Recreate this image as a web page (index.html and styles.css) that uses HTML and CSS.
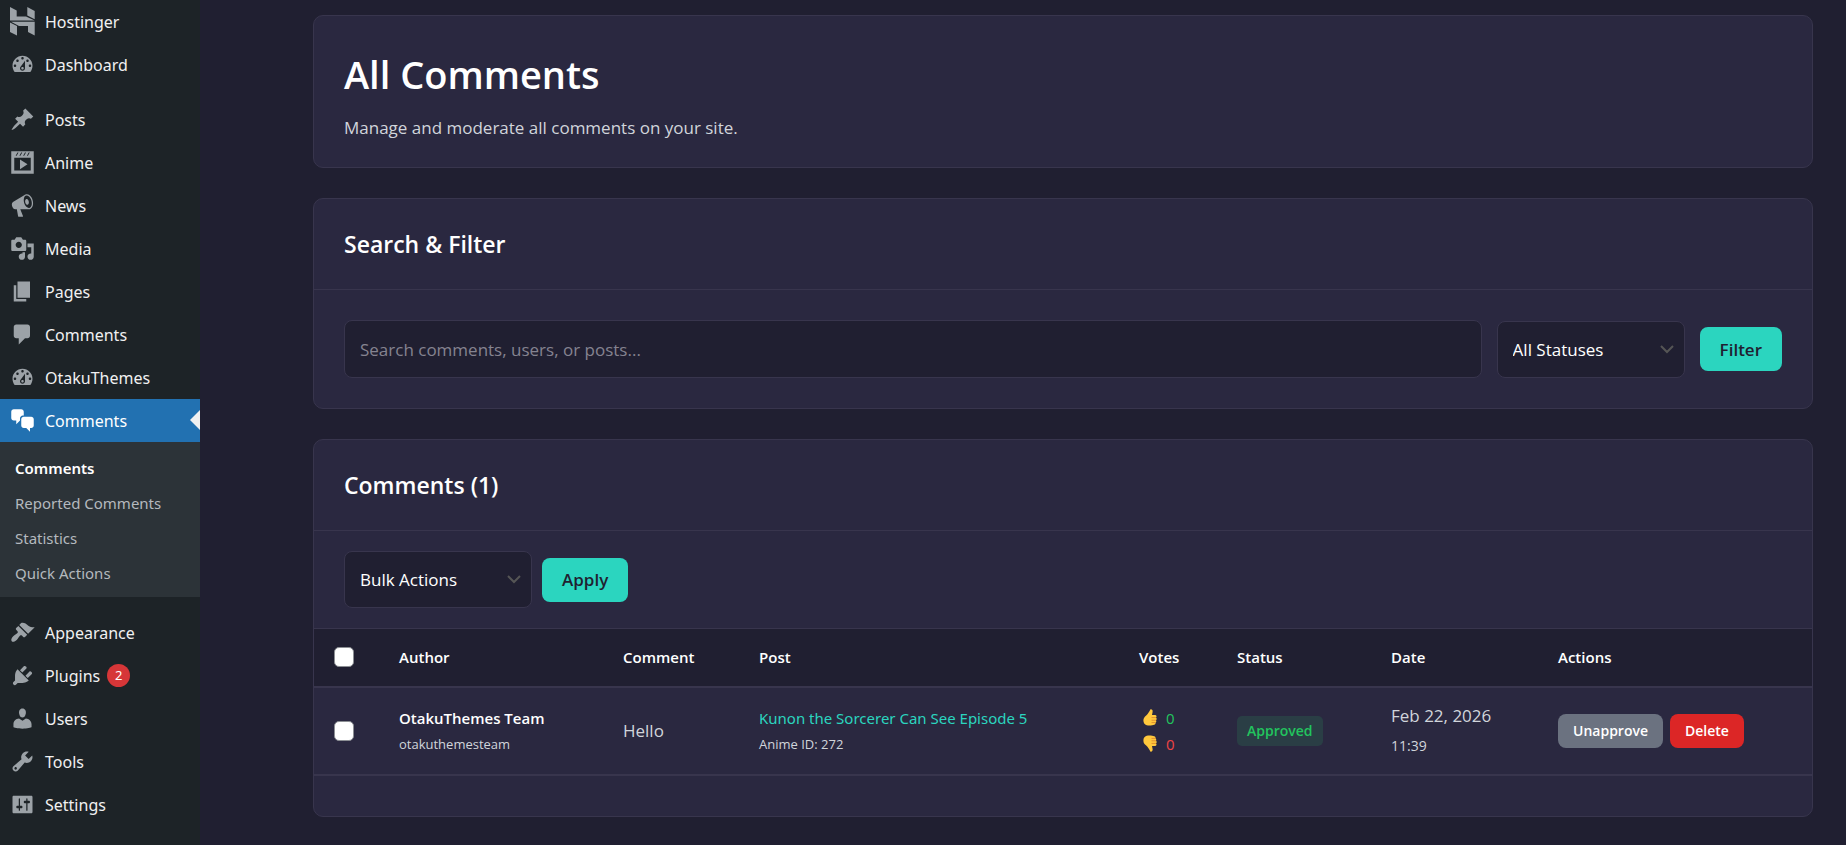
FILE: index.html
```
<!DOCTYPE html>
<html lang="en">
<head>
<meta charset="utf-8">
<title>All Comments</title>
<link rel="stylesheet" href="styles.css">
</head>
<body>

<!-- admin menu -->
<nav class="menu">
    <ul>
        <li><a href="#">
            <svg viewBox="0 0 25 29" class="tall"><path d="M0 0l6.700 3.500v6H16l8.700 4H0zM17.300 0l7.400 4v8.200l-7.400-3.700zM0 15.500L7 19v9.500L0 25zM1 14.800h23.700v13.700L18 25v-6H9z"/></svg>
            Hostinger</a></li>
        <li><a href="#">
            <svg viewBox="0 0 20 20"><path d="M3.76 16h12.48c1.1-1.37 1.76-3.11 1.76-5 0-4.42-3.58-8-8-8s-8 3.58-8 8c0 1.89.66 3.63 1.76 5zM10 4c.55 0 1 .45 1 1s-.45 1-1 1-1-.45-1-1 .45-1 1-1zM6 6c.55 0 1 .45 1 1s-.45 1-1 1-1-.45-1-1 .45-1 1-1zm8 0c.55 0 1 .45 1 1s-.45 1-1 1-1-.45-1-1 .45-1 1-1zm-5.37 5.55L12 7v6c0 1.1-.9 2-2 2s-2-.9-2-2c0-.57.24-1.08.63-1.45zM4 10c.55 0 1 .45 1 1s-.45 1-1 1-1-.45-1-1 .45-1 1-1zm12 0c.55 0 1 .45 1 1s-.45 1-1 1-1-.45-1-1 .45-1 1-1zm-5 3c0-.55-.45-1-1-1s-1 .45-1 1 .45 1 1 1 1-.45 1-1z"/></svg>
            Dashboard</a></li>
        <li class="sep"></li>
        <li><a href="#">
            <svg viewBox="0 0 20 20"><path d="M10.44 3.02l1.82-1.82 6.36 6.35-1.83 1.82c-1.05-.68-2.48-.57-3.41.36l-.75.75c-.92.93-1.04 2.35-.35 3.41l-1.83 1.82-2.41-2.41-2.8 2.79c-.42.42-3.38 2.71-3.8 2.29s1.86-3.39 2.28-3.81l2.79-2.79L4.1 9.36l1.83-1.82c1.05.69 2.48.57 3.4-.36l.75-.75c.93-.92 1.05-2.35.36-3.41z"/></svg>
            Posts</a></li>
        <li><a href="#">
            <svg viewBox="0 0 20 20"><path d="M1 1h18v18H1zM3.400 6.100h13.200v10.300H3.400zM8 7.500l6 3.900-6 3.900zM4.500 4.500L6 2h.8L5.300 4.500zM7.500 4.500L9 2h.8L8.300 4.500zM10.500 4.500L12 2h.8l-1.500 2.500zM13.500 4.500L15 2h.8l-1.500 2.500z"/></svg>
            Anime</a></li>
        <li><a href="#">
            <svg viewBox="0 0 20 20"><path d="M18.150 5.940c.46 1.620.38 3.220-.02 4.480-.42 1.280-1.260 2.180-2.300 2.480-.16.060-.26.060-.4.060-.06.020-.12.020-.18.020-.06.020-.14.020-.22.020h-6.800l2.220 5.500c.02.140-.06.260-.14.340-.08.100-.24.160-.34.160H6.950c-.1 0-.26-.06-.34-.16-.08-.08-.16-.2-.14-.34l-1-5.500H4.250l-.02-.02c-.5.060-1.080-.18-1.540-.62s-.88-1.080-1.060-1.880c-.24-.8-.2-1.560-.02-2.200.18-.62.580-1.080 1.060-1.300l.02-.02 9-5.400c.1-.06.180-.1.240-.16.060-.04.140-.08.240-.12.160-.08.280-.12.5-.18 1.040-.3 2.240.1 3.220.98s1.840 2.240 2.260 3.860zm-2.580 5.980h-.02c.4-.1.740-.34 1.040-.7.580-.7.860-1.760.86-3.040 0-.64-.1-1.300-.28-1.980-.34-1.360-1.020-2.500-1.780-3.240s-1.680-1.100-2.460-.88c-.82.220-1.400.960-1.700 2-.32 1.040-.28 2.360.06 3.720.38 1.360 1 2.500 1.800 3.240.78.740 1.620 1.100 2.480.88zm-2.540-7.080c.22-.04.420-.02.620.04.380.160.760.480 1.020 1s.42 1.200.42 1.780c0 .3-.04.560-.12.8-.18.480-.44.840-.86.940-.34.100-.8-.06-1.140-.4s-.64-.86-.78-1.500c-.18-.62-.12-1.240.02-1.720s.48-.84.820-.94z"/></svg>
            News</a></li>
        <li><a href="#">
            <svg viewBox="0 0 20 20"><path d="M13 11V4c0-.55-.45-1-1-1h-1.670L9 1H5L3.670 3H2c-.55 0-1 .45-1 1v7c0 .55.45 1 1 1h10c.55 0 1-.45 1-1zM7 4.500c1.380 0 2.500 1.120 2.500 2.500S8.380 9.500 7 9.500 4.500 8.380 4.500 7 5.620 4.500 7 4.500zM14 6h5v10.500c0 1.380-1.120 2.500-2.500 2.500S14 17.880 14 16.500s1.120-2.500 2.500-2.500c.17 0 .34.02.5.05V9h-3V6zm-4 8.050V13h2v3.500c0 1.380-1.120 2.500-2.500 2.500S7 17.880 7 16.500 8.120 14 9.500 14c.17 0 .34.02.5.05z"/></svg>
            Media</a></li>
        <li><a href="#">
            <svg viewBox="0 0 20 20"><path d="M6 15V2h10v13H6zm-1 1h8v2H3V5h2v11z"/></svg>
            Pages</a></li>
        <li><a href="#">
            <svg viewBox="0 0 20 20"><path d="M5 2h9c1.1 0 2 .9 2 2v7c0 1.1-.9 2-2 2h-2l-5 5v-5H5c-1.1 0-2-.9-2-2V4c0-1.1.9-2 2-2z"/></svg>
            Comments</a></li>
        <li><a href="#">
            <svg viewBox="0 0 20 20"><path d="M3.76 16h12.48c1.1-1.37 1.76-3.11 1.76-5 0-4.42-3.58-8-8-8s-8 3.58-8 8c0 1.89.66 3.63 1.76 5zM10 4c.55 0 1 .45 1 1s-.45 1-1 1-1-.45-1-1 .45-1 1-1zM6 6c.55 0 1 .45 1 1s-.45 1-1 1-1-.45-1-1 .45-1 1-1zm8 0c.55 0 1 .45 1 1s-.45 1-1 1-1-.45-1-1 .45-1 1-1zm-5.37 5.55L12 7v6c0 1.1-.9 2-2 2s-2-.9-2-2c0-.57.24-1.08.63-1.45zM4 10c.55 0 1 .45 1 1s-.45 1-1 1-1-.45-1-1 .45-1 1-1zm12 0c.55 0 1 .45 1 1s-.45 1-1 1-1-.45-1-1 .45-1 1-1zm-5 3c0-.55-.45-1-1-1s-1 .45-1 1 .45 1 1 1 1-.45 1-1z"/></svg>
            OtakuThemes</a></li>
        <li class="current"><a href="#">
            <svg viewBox="0 0 20 20"><path d="M11 6h-.82C9.07 6 8 7.200 8 8.160V10l-3 3v-3H3c-1.1 0-2-.9-2-2V3c0-1.1.9-2 2-2h6c1.1 0 2 .9 2 2v3zm0 1h6c1.1 0 2 .9 2 2v5c0 1.1-.9 2-2 2h-1v3l-3-3h-2c-1.1 0-2-.9-2-2V9c0-1.1.9-2 2-2z"/></svg>
            Comments</a></li>
    </ul>
    <ul class="submenu">
        <li><a href="#" class="on">Comments</a></li>
        <li><a href="#">Reported Comments</a></li>
        <li><a href="#">Statistics</a></li>
        <li><a href="#">Quick Actions</a></li>
    </ul>
    <ul>
        <li><a href="#">
            <svg viewBox="0 0 20 20"><path d="M14.480 11.060L7.410 3.990l1.500-1.500c.5-.56 2.300-.47 3.510.32 1.210.8 1.430 1.280 2.910 2.100 1.180.64 2.450 1.260 4.450.85zm-.71.71L6.700 4.700 4.930 6.470c-.39.39-.39 1.020 0 1.410l1.060 1.060c.39.39.39 1.030 0 1.420-.6.6-1.430 1.110-2.210 1.690-.35.26-.7.53-1.010.84C1.430 14.230.4 16.080 1.400 17.070c.99 1 2.840-.03 4.180-1.360.31-.31.58-.66.85-1.020.57-.78 1.080-1.610 1.690-2.210.39-.39 1.020-.39 1.410 0l1.060 1.060c.39.39 1.020.39 1.410 0z"/></svg>
            Appearance</a></li>
        <li><a href="#">
            <svg viewBox="0 0 20 20"><path d="M13.110 4.360L9.870 7.600 8 5.730l3.240-3.240c.35-.34 1.050-.2 1.560.32.52.51.66 1.210.31 1.550zm-8 1.770l.91-1.120 9.010 9.010-1.190.84c-.71.71-2.630 1.160-3.820 1.160H6.140L4.900 17.260c-.59.59-1.540.59-2.120 0-.59-.58-.59-1.530 0-2.120l1.240-1.240v-3.880c0-1.130.4-3.190 1.090-3.890zm7.260 3.970l3.240-3.240c.34-.35 1.040-.21 1.550.31.52.51.66 1.210.31 1.550l-3.240 3.250z"/></svg>
            Plugins <span class="count">2</span></a></li>
        <li><a href="#">
            <svg viewBox="0 0 20 20"><path d="M10 9.250c-2.270 0-2.730-3.440-2.730-3.440C7 4.020 7.820 2 9.970 2c2.160 0 2.980 2.020 2.710 3.810 0 0-.41 3.440-2.680 3.440zm0 2.570L12.720 10c2.390 0 4.520 2.330 4.520 4.530v2.490s-3.650 1.130-7.240 1.130c-3.650 0-7.240-1.130-7.240-1.130v-2.490c0-2.250 1.940-4.480 4.470-4.480z"/></svg>
            Users</a></li>
        <li><a href="#">
            <svg viewBox="0 0 20 20"><path d="M16.680 9.770c-1.340 1.340-3.300 1.670-4.950.99l-5.410 6.520c-.99.99-2.590.99-3.580 0s-.99-2.590 0-3.570l6.520-5.420c-.68-1.650-.35-3.610.99-4.950 1.280-1.280 3.120-1.620 4.720-1.060l-2.890 2.890 2.820 2.820 2.860-2.870c.53 1.580.18 3.390-1.080 4.650zM3.810 16.210c.4.39 1.040.39 1.430 0 .4-.4.4-1.040 0-1.430-.39-.4-1.030-.4-1.430 0-.39.39-.39 1.030 0 1.430z"/></svg>
            Tools</a></li>
        <li><a href="#">
            <svg viewBox="0 0 20 20"><path d="M18 16V4c0-.55-.45-1-1-1H3c-.55 0-1 .45-1 1v12c0 .55.45 1 1 1h14c.55 0 1-.45 1-1zM8 11h1c.55 0 1 .45 1 1s-.45 1-1 1H8v1.500c0 .28-.22.5-.5.5s-.5-.22-.5-.5V13H6c-.55 0-1-.45-1-1s.45-1 1-1h1V5.500c0-.28.22-.5.5-.5s.5.22.5.5V11zm5-2h-1c-.55 0-1-.45-1-1s.45-1 1-1h1V5.500c0-.28.22-.5.5-.5s.5.22.5.5V7h1c.55 0 1 .45 1 1s-.45 1-1 1h-1v5.500c0 .28-.22.5-.5.5s-.5-.22-.5-.5V9z"/></svg>
            Settings</a></li>
    </ul>
</nav>

<main>
    <section class="card intro">
        <h1>All Comments</h1>
        <p>Manage and moderate all comments on your site.</p>
    </section>

    <section class="card">
        <h2>Search &amp; Filter</h2>
        <form class="filters">
            <input type="text" class="field search" placeholder="Search comments, users, or posts..." aria-label="Search comments">
            <select class="field" aria-label="Status">
                <option>All Statuses</option>
                <option>Approved</option>
                <option>Pending</option>
            </select>
            <button type="button" class="btn">Filter</button>
        </form>
    </section>

    <section class="card">
        <h2>Comments (1)</h2>
        <div class="bulk">
            <select class="field" aria-label="Bulk actions">
                <option>Bulk Actions</option>
                <option>Approve</option>
                <option>Delete</option>
            </select>
            <button type="button" class="btn">Apply</button>
        </div>
        <table>
            <colgroup>
                <col class="c-check"><col class="c-author"><col class="c-comment"><col class="c-post"><col class="c-votes"><col class="c-status"><col class="c-date"><col>
            </colgroup>
            <thead>
                <tr>
                    <th><input type="checkbox" aria-label="Select all"></th>
                    <th>Author</th>
                    <th>Comment</th>
                    <th>Post</th>
                    <th>Votes</th>
                    <th>Status</th>
                    <th>Date</th>
                    <th>Actions</th>
                </tr>
            </thead>
            <tbody>
                <tr>
                    <td><input type="checkbox" aria-label="Select comment"></td>
                    <td><strong>OtakuThemes Team</strong><small>otakuthemesteam</small></td>
                    <td>Hello</td>
                    <td><a href="#" class="post">Kunon the Sorcerer Can See Episode 5</a><small>Anime ID: 272</small></td>
                    <td>
                        <div class="vote up"><svg viewBox="0 0 14 17"><path class="hand" d="M7.500.3c1.600-.2 2.400 1 2.100 2.600L9 6h3c1.600 0 2 1.800 1 2.500 1 .8.8 2.200 0 2.700.6.9.3 2-.5 2.400.3 1.200-.3 2-1.300 2.200-2 .8-5.500 1-7.500.4C1.500 15.600.4 13.800.4 11.500.4 9 1.500 8 3.200 6.500 5 5 6 3 7.500.3z"/><path class="crease" d="M8.500 8.600H13M8.500 11.200H13M8.500 13.600h4"/></svg> 0</div>
                        <div class="vote down"><svg viewBox="0 0 14 17"><g transform="matrix(1 0 0 -1 0 17)"><path class="hand" d="M7.500.3c1.600-.2 2.400 1 2.100 2.600L9 6h3c1.600 0 2 1.800 1 2.500 1 .8.8 2.200 0 2.700.6.9.3 2-.5 2.400.3 1.200-.3 2-1.300 2.200-2 .8-5.500 1-7.500.4C1.500 15.600.4 13.800.4 11.500.4 9 1.500 8 3.200 6.500 5 5 6 3 7.500.3z"/><path class="crease" d="M8.500 8.600H13M8.500 11.200H13M8.500 13.600h4"/></g></svg> 0</div>
                    </td>
                    <td><span class="status">Approved</span></td>
                    <td class="date">Feb 22, 2026<small>11:39</small></td>
                    <td><div class="actions"><button type="button" class="gray">Unapprove</button><button type="button" class="red">Delete</button></div></td>
                </tr>
            </tbody>
        </table>
    </section>
</main>

</body>
</html>
```
FILE: styles.css
```
* {
    box-sizing: border-box;
}
body {
    margin: 0;
    display: flex;
    min-height: 100vh;
    background: #201f31;
    color: #d1d5db;
    font-family: "Open Sans", "Noto Sans", sans-serif;
    font-size: 17px;
}
ul {
    list-style: none;
    margin: 0;
    padding: 0;
}
a {
    text-decoration: none;
}

/* sidebar */
.menu {
    width: 200px;
    flex: none;
    background: #1d2327;
    font-family: "Noto Sans", "Open Sans", sans-serif;
}
.menu a {
    display: flex;
    align-items: center;
    height: 43px;
    padding-left: 10px;
    gap: 10px;
    color: #f0f0f1;
    font-size: 16px;
}
.menu svg {
    width: 25px;
    height: 25px;
    fill: #9ca2a7;
    fill-rule: evenodd;
}
.menu .tall {
    height: 29px;
    fill-rule: nonzero;
}
.menu .sep {
    height: 12px;
}
.current {
    position: relative;
    background: #2271b1;
}
.current::after {
    content: "";
    position: absolute;
    right: 0;
    top: 11px;
    border: 10px solid transparent;
    border-left: 0;
    border-right-color: #f0f0f1;
}
.menu .current a,
.menu .current svg {
    color: #fff;
    fill: #fff;
}
.menu .submenu {
    margin-bottom: 14px;
    background: #2c3338;
    padding: 8px 0 7px;
}
.menu .submenu a {
    height: 35px;
    padding-left: 15px;
    color: #b4b9be;
    font-size: 15px;
}
.menu .submenu .on {
    color: #fff;
    font-weight: 600;
}
.count {
    width: 23px;
    line-height: 23px;
    margin-left: -3px;
    border-radius: 50%;
    background: #d63638;
    color: #fff;
    font-size: 13px;
    text-align: center;
}

/* content */
main {
    flex: 1;
    padding: 15px 33px 28px 113px;
}
.card {
    margin-bottom: 30px;
    background: #2a2840;
    border: 1px solid #38354d;
    border-radius: 10px;
}
.card:last-child {
    margin-bottom: 0;
    padding-bottom: 40px;
}
.intro {
    padding: 30px 30px 26px;
}
h1, h2 {
    margin: 0;
    color: #fff;
    font-weight: 600;
}
h1 {
    font-size: 38px;
    line-height: 56px;
}
h2 {
    padding: 30px;
    border-bottom: 1px solid #38354d;
    font-size: 23px;
    line-height: 30px;
}
.intro p {
    margin: 13px 0 0;
    line-height: 26px;
}
.filters {
    display: flex;
    align-items: center;
    gap: 15px;
    padding: 30px;
}
.field {
    width: 188px;
    height: 57px;
    padding: 0 15px;
    background: #201f31;
    border: 1px solid #38354d;
    border-radius: 8px;
    color: #fff;
    font: inherit;
}
select.field {
    appearance: none;
    background: #201f31 url("data:image/svg+xml,%3Csvg xmlns='http://www.w3.org/2000/svg' width='14' height='9'%3E%3Cpath d='M1 1l6 6 6-6' fill='none' stroke='%23555' stroke-width='2'/%3E%3C/svg%3E") no-repeat right 10px center;
}
.search {
    flex: 1;
    height: 58px;
}
.search::placeholder {
    color: #858390;
}
.btn {
    height: 44px;
    padding: 0 20px;
    border: 0;
    border-radius: 8px;
    background: #2bd5bf;
    color: #201f31;
    font: inherit;
    font-weight: 600;
}
.bulk {
    display: flex;
    align-items: center;
    gap: 10px;
    padding: 20px 30px;
}

/* comments table */
table {
    width: 100%;
    border-collapse: collapse;
    table-layout: fixed;
    border-top: 1px solid #38354d;
}
th, td {
    padding: 0 20px;
    text-align: left;
    border-bottom: 2px solid #38354d;
    white-space: nowrap;
}
th {
    height: 58px;
    background: #201f31;
    color: #fff;
    font-size: 15px;
    font-weight: 600;
}
td {
    height: 88px;
}
.c-check { width: 65px; }
.c-author { width: 224px; }
.c-comment { width: 136px; }
.c-post { width: 380px; }
.c-votes { width: 98px; }
.c-status { width: 154px; }
.c-date { width: 167px; }
input[type=checkbox] {
    appearance: none;
    display: block;
    width: 20px;
    height: 20px;
    margin: 0;
    background: #fff;
    border: 1px solid #8c8f94;
    border-radius: 5px;
}
strong, .post {
    display: block;
    color: #fff;
    font-size: 15px;
    font-weight: 600;
    line-height: 26px;
}
.post {
    color: #2bd5bf;
    font-family: "Noto Sans", "Open Sans", sans-serif;
    font-weight: 400;
}
small {
    display: block;
    font-size: 13px;
    line-height: 26px;
}
.date {
    line-height: 30px;
}
.date small {
    font-size: 14px;
    line-height: 30px;
}
.vote {
    display: flex;
    align-items: center;
    gap: 9px;
    padding-left: 4px;
    font-size: 15px;
    line-height: 26px;
}
.vote svg {
    width: 14px;
    height: 17px;
}
.hand {
    fill: #ffc83d;
}
.crease {
    fill: none;
    stroke: #e0902f;
}
.up {
    color: #22c55e;
}
.down {
    color: #ef4444;
}
.status {
    display: inline-block;
    padding: 0 10px;
    border-radius: 5px;
    background: #2a3e45;
    color: #22c55e;
    font-size: 14px;
    font-weight: 600;
    line-height: 30px;
}
.actions {
    display: flex;
    gap: 7px;
}
.actions button {
    height: 34px;
    padding: 0 15px;
    border: 0;
    border-radius: 8px;
    color: #fff;
    font: inherit;
    font-size: 14px;
    font-weight: 600;
}
.gray {
    background: #6b7280;
}
.red {
    background: #dc2626;
}
```
